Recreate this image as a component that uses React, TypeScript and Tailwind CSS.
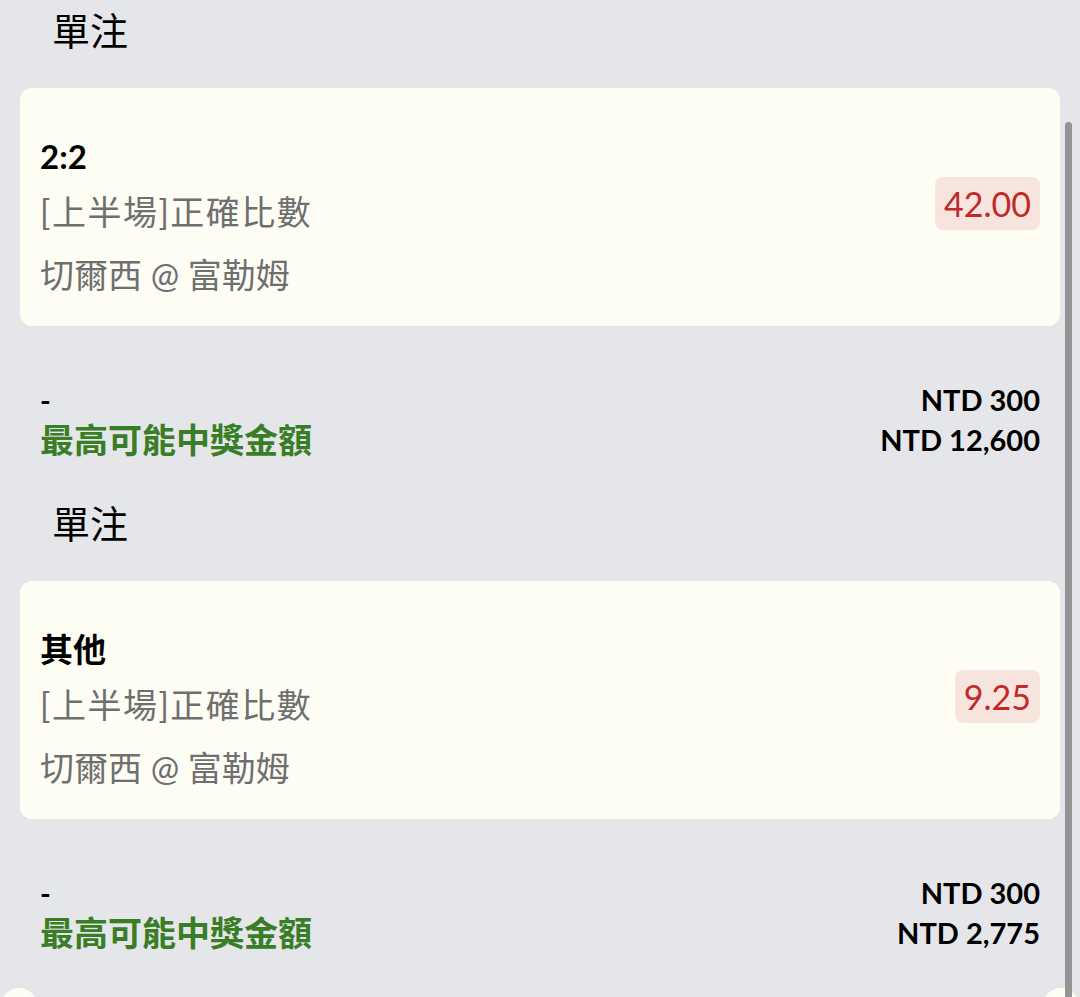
const bets = [
  {
    selection: "2:2",
    market: "[上半場]正確比數",
    match: "切爾西 @ 富勒姆",
    odds: "42.00",
    stake: "NTD 300",
    payout: "NTD 12,600",
  },
  {
    selection: "其他",
    market: "[上半場]正確比數",
    match: "切爾西 @ 富勒姆",
    odds: "9.25",
    stake: "NTD 300",
    payout: "NTD 2,775",
  },
];

const font = { fontFamily: 'Lato, "Noto Sans CJK TC", "Noto Sans", sans-serif' };

function BetSection({ bet }: { bet: (typeof bets)[number] }) {
  return (
    <section className="flex flex-col">
      {/* Header */}
      <h2 className="h-[60px] pl-[52px] text-[38px] leading-[60px] font-normal text-black">
        單注
      </h2>

      {/* Bet card */}
      <div className="mx-[20px] mt-[28px] h-[238px] rounded-[12px] bg-[#fdfdf4] pl-[20px] pr-[20px] flex flex-row items-center">
        <div className="flex-1 flex flex-col pt-[44px] pb-[23px] self-stretch">
          <div className="h-[48px] text-[33px] leading-[48px] font-bold text-black">
            {bet.selection}
          </div>
          <div className="h-[56px] mt-[4px] text-[34px] leading-[56px] text-[#6f6f6f] tracking-[1.5px]">
            {bet.market}
          </div>
          <div className="h-[56px] mt-[7px] text-[34px] leading-[56px] text-[#6f6f6f]">
            {bet.match}
          </div>
        </div>
        <span className="mb-[7px] h-[53px] rounded-[8px] bg-[#f7e5dd] px-[9px] text-[34px] leading-[53px] text-[#c0282b]">
          {bet.odds}
        </span>
      </div>

      {/* Summary */}
      <div className="mt-[54px] px-[40px] flex flex-col">
        <div className="h-[40px] flex flex-row items-center justify-between">
          <span className="text-[29px] font-bold text-black leading-[40px]">-</span>
          <span className="text-[29px] font-bold text-black leading-[40px]">{bet.stake}</span>
        </div>
        <div className="h-[40px] flex flex-row items-center justify-between">
          <span className="text-[34px] font-bold text-[#3a7d27] leading-[40px]">最高可能中獎金額</span>
          <span className="text-[29px] font-bold text-black leading-[40px]">{bet.payout}</span>
        </div>
      </div>
    </section>
  );
}

export default function App() {
  return (
    <div className="relative w-[1080px] h-[997px] overflow-hidden bg-[#e5e6e9]" style={font}>
      <div className="flex flex-col gap-[33px]">
        {bets.map((bet, i) => (
          <BetSection key={i} bet={bet} />
        ))}

        {/* Start of next ticket */}
        <div className="flex flex-row justify-between px-[1px] mt-[2px]">
          <div className="w-[36px] h-[36px] rounded-full bg-[#fdfdf4]" />
          <div className="w-[36px] h-[36px] rounded-full bg-[#fdfdf4]" />
        </div>
      </div>

      {/* Scrollbar overlay */}
      <div className="absolute right-[8px] top-[122px] w-[7px] h-[900px] rounded-full bg-[#949494]" />
    </div>
  );
}
